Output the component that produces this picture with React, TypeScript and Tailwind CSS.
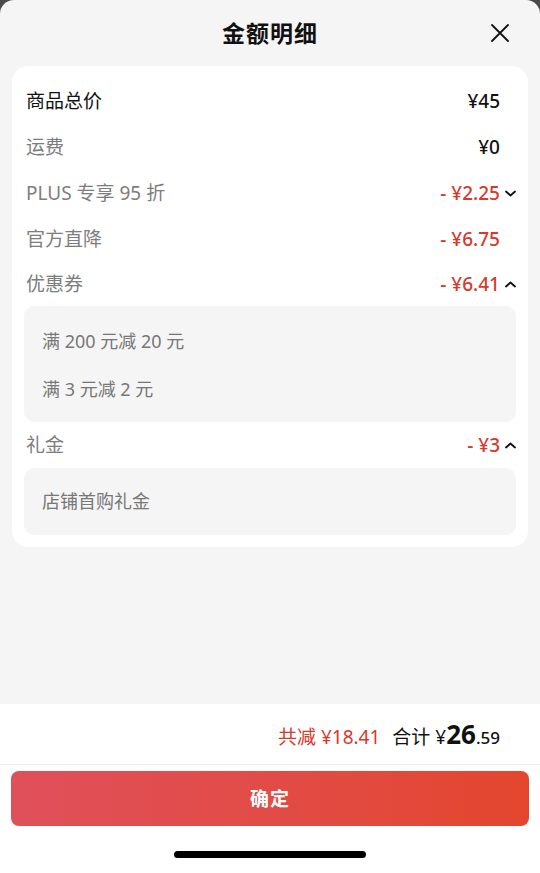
import React from 'react';

const RED = 'text-[#d7392b]';

type Row = { label: string; value: string; red?: boolean; strong?: boolean; chevron?: 'up' | 'down'; sub?: string[]; h: string };

const rows: Row[] = [
  { label: '商品总价', value: '¥45', strong: true, h: 'h-[46px]' },
  { label: '运费', value: '¥0', h: 'h-[46px]' },
  { label: 'PLUS 专享 95 折', value: '- ¥2.25', red: true, chevron: 'down', h: 'h-[46px]' },
  { label: '官方直降', value: '- ¥6.75', red: true, h: 'h-[46px]' },
  { label: '优惠券', value: '- ¥6.41', red: true, chevron: 'up', sub: ['满 200 元减 20 元', '满 3 元减 2 元'], h: 'h-[44px]' },
  { label: '礼金', value: '- ¥3', red: true, chevron: 'up', sub: ['店铺首购礼金'], h: 'h-[46px]' },
];

const Chevron: React.FC<{ dir: 'up' | 'down' }> = ({ dir }) => (
  <svg width="11" height="7" viewBox="0 0 11 7" fill="none" stroke="#111" strokeWidth="1.8" strokeLinecap="round" strokeLinejoin="round">
    {dir === 'down' ? <path d="M1 1.5 L5.5 5.5 L10 1.5" /> : <path d="M1 5.5 L5.5 1.5 L10 5.5" />}
  </svg>
);

export default function App() {
  return (
    <div className="w-[540px] h-[873px] bg-[#4a4a4a] overflow-hidden" style={{ fontFamily: '"Noto Sans", "Noto Sans CJK SC", sans-serif' }}>
      <div className="h-full flex flex-col bg-[#f5f5f5] rounded-t-[14px] overflow-hidden">
        {/* Заголовок */}
        <div className="h-[66px] relative flex items-center justify-center">
          <h1 className="text-[23px] font-bold text-[#111] tracking-[1px]">金额明细</h1>
          <svg className="absolute right-[31px] top-[24px]" width="18" height="18" viewBox="0 0 18 18" stroke="#111" strokeWidth="1.8" strokeLinecap="round">
            <path d="M1 1 L17 17 M17 1 L1 17" />
          </svg>
        </div>

        {/* Карточка с суммами */}
        <div className="mx-[12px] bg-white rounded-[16px] pt-[12px] pb-[12px] pl-[14px] pr-[12px]">
          {rows.map((r) => (
            <div key={r.label}>
              <div className={`${r.h} flex items-center justify-between`}>
                <span className={`text-[19px] ${r.strong ? 'text-[#111]' : 'text-[#7d7d7d]'}`}>{r.label}</span>
                <div className="flex items-center">
                  <span className={`text-[19px] font-medium ${r.red ? RED : 'text-[#111]'}`}>{r.value}</span>
                  <span className="w-[16px] flex justify-end">{r.chevron && <Chevron dir={r.chevron} />}</span>
                </div>
              </div>
              {r.sub && (
                <div className={`-ml-[2px] bg-[#f5f5f5] rounded-[10px] pl-[18px] ${r.sub.length > 1 ? 'pt-[11px] pb-[9px]' : ''}`}>
                  {r.sub.map((s) => (
                    <div key={s} className={`${r.sub!.length > 1 ? 'h-[48px]' : 'h-[67px]'} flex items-center text-[18px] text-[#777]`}>
                      {s}
                    </div>
                  ))}
                </div>
              )}
            </div>
          ))}
        </div>

        <div className="flex-1" />

        {/* Нижняя панель */}
        <div className="bg-white h-[169px] flex flex-col">
          <div className="h-[61px] flex items-center justify-end pr-[40px] border-b border-[#eeeeee]">
            <div className="flex items-baseline">
              <span className={`text-[19px] ${RED}`}>共减 ¥18.41</span>
              <span className="ml-[12px] text-[19px] text-[#111]">合计 ¥</span>
              <span className="text-[26px] font-bold text-[#111]">26</span>
              <span className="text-[17px] font-medium text-[#111]">.59</span>
            </div>
          </div>
          <div className="px-[11px] pt-[6px]">
            <button className="w-full h-[55px] rounded-[8px] bg-gradient-to-r from-[#e0505a] to-[#e4462d] text-white text-[19px] font-bold tracking-[1px] pt-[2px]">
              确定
            </button>
          </div>
          <div className="flex-1 flex items-center justify-center pt-[10px]">
            <div className="w-[192px] h-[7px] rounded-full bg-black" />
          </div>
        </div>
      </div>
    </div>
  );
}
